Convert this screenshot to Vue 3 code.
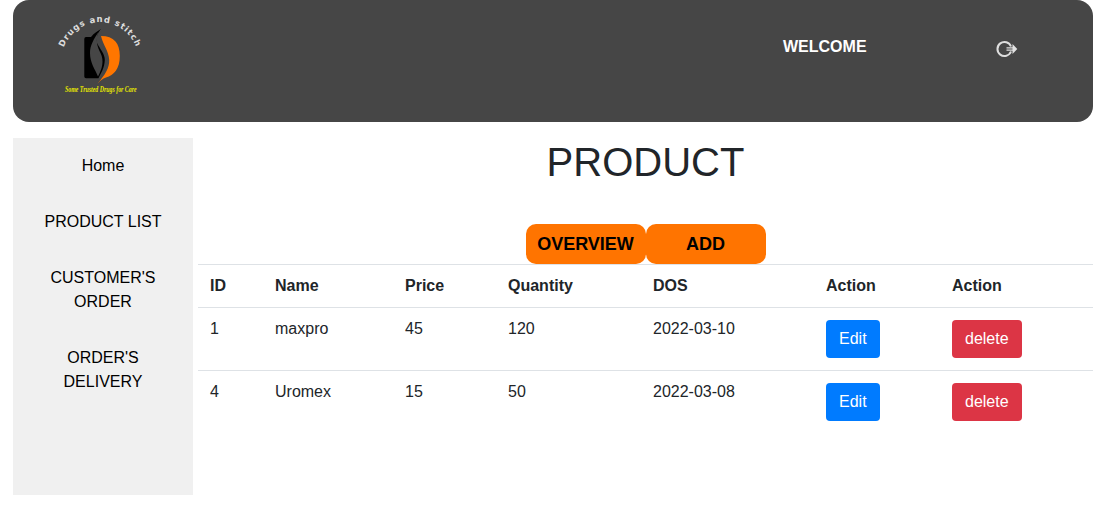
<script setup>
const menu = ['Home', 'PRODUCT LIST', "CUSTOMER'S ORDER", "ORDER'S DELIVERY"]
const columns = ['ID', 'Name', 'Price', 'Quantity', 'DOS', 'Action', 'Action']
const products = [
  { id: 1, name: 'maxpro', price: 45, quantity: 120, dos: '2022-03-10' },
  { id: 4, name: 'Uromex', price: 15, quantity: 50, dos: '2022-03-08' },
]
</script>

<template>
  <div class="page">
    <header class="topbar">
      <svg class="logo" width="100" height="100" viewBox="0 0 100 100">
        <defs><path id="logo-arc" d="M12 62A38.500 38.500 0 1 1 88 62" /></defs>
        <text class="brand"><textPath href="#logo-arc" startOffset="50%" text-anchor="middle">Drugs and stitch</textPath></text>
        <path d="M36 32H41C44 28 48 26 51 24C47 29 46 33 47 38C50 44 55 49 54.800 55C54.500 63 51 68 48.500 73.300H36Q34.300 73.300 34.300 71.500V34Q34.300 32 36 32Z" fill="#000" />
        <path d="M48.500 27C44 34 40 40 40 48C40 58 45 64 48 71.500C52 64 54.500 56 50.500 48C47 41 45.500 35 48.500 27Z" fill="#464646" />
        <path d="M51 31C64 31 69.800 38 69.800 51C69.800 64 64 70 56 72.500C52.500 73.500 50 76 47.500 78.500C55 70 59.500 63 59.200 55C58.800 46 53 40 51 31Z" fill="#ff7600" />
        <text class="slogan" transform="translate(15 86.500) scale(0.735 1)">Some Trusted Drugs for Care</text>
      </svg>
      <span class="welcome">WELCOME</span>
      <svg class="logout" width="24" height="20" viewBox="0 0 24 20" fill="none" stroke="#dedede">
        <path d="M16 7.500A7 7 0 1 0 16 12.500" stroke-width="2" />
        <path d="M11.500 8.800H18M11.500 11.200H18" stroke-width="1.300" />
        <path d="M17.500 5V15L22.300 10Z" fill="#e2e2e2" stroke="none" />
      </svg>
    </header>
    <div class="body">
      <nav class="sidebar">
        <a v-for="item in menu" :key="item">{{ item }}</a>
      </nav>
      <main>
        <h1>PRODUCT</h1>
        <div class="tabs"><button>OVERVIEW</button><button>ADD</button></div>
        <table>
          <colgroup><col class="c1"><col class="c2"><col class="c3"><col class="c4"><col class="c5"><col class="c6"><col></colgroup>
          <thead><tr><th v-for="(c, i) in columns" :key="i">{{ c }}</th></tr></thead>
          <tbody>
            <tr v-for="p in products" :key="p.id">
              <td>{{ p.id }}</td><td>{{ p.name }}</td><td>{{ p.price }}</td><td>{{ p.quantity }}</td><td>{{ p.dos }}</td>
              <td><button class="btn edit">Edit</button></td>
              <td><button class="btn delete">delete</button></td>
            </tr>
          </tbody>
        </table>
      </main>
    </div>
  </div>
</template>

<style>
body { margin: 0; background: #fff; }
</style>

<style scoped>
* { box-sizing: border-box; }
.page { width: 1080px; margin-left: 13px; font: 16px/24px "Liberation Sans", Arial, sans-serif; color: #212529; }
button { font-family: inherit; border: 0; margin: 0; }
.topbar { height: 122px; border-radius: 16px; background: #464646; display: flex; align-items: flex-start; padding-left: 37px; }
.logo { margin-top: 5px; overflow: visible; }
.brand { font: bold 8.5px "DejaVu Sans", sans-serif; fill: #ddd; letter-spacing: 0.9px; }
.slogan { font: italic bold 8px "Liberation Serif", serif; fill: #e8e800; }
.welcome { margin: 35px 0 0 633px; width: 84px; color: #fff; font-weight: bold; white-space: nowrap; }
.logout { margin: 39px 0 0 128px; }
.body { display: flex; margin-top: 16px; }
.sidebar { width: 180px; height: 357px; background: #f0f0f0; display: flex; flex-direction: column; gap: 32px; padding: 16px 30px; text-align: center; color: #000; }
main { width: 895px; margin-left: 5px; }
h1 { margin: 0; height: 86px; font-size: 40px; font-weight: normal; line-height: 48px; text-align: center; }
.tabs { display: flex; justify-content: center; height: 40px; }
.tabs button { width: 120px; border-radius: 10px; background: #ff7400; color: #000; font-size: 18px; font-weight: bold; padding: 0; }
table { width: 895px; table-layout: fixed; border-spacing: 0; line-height: 18px; }
.c1 { width: 65px; }
.c2 { width: 130px; }
.c3 { width: 103px; }
.c4 { width: 145px; }
.c5 { width: 173px; }
.c6 { width: 126px; }
th, td { padding: 12px; border-top: 1px solid #dee2e6; text-align: left; vertical-align: top; }
.btn { display: block; height: 38px; padding: 0 13px; border-radius: 4px; color: #fff; font-size: 16px; line-height: 24px; }
.edit { background: #007bff; }
.delete { background: #dc3545; }
</style>
